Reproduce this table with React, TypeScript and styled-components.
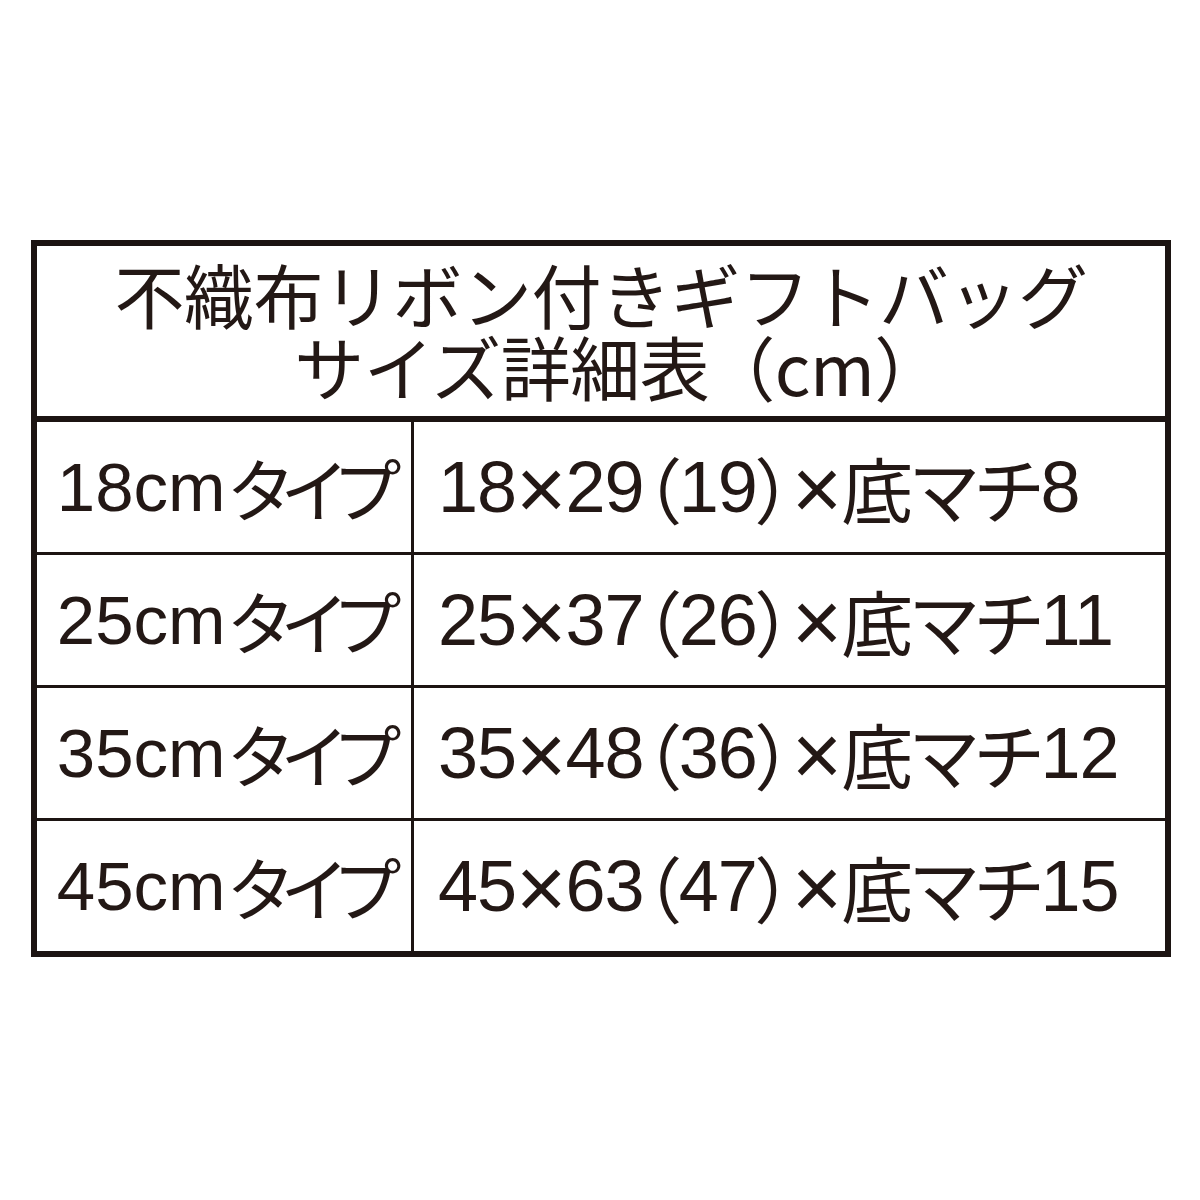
import React from 'react';
import styled, { createGlobalStyle } from 'styled-components';

const GlobalStyle = createGlobalStyle`
  html, body {
    margin: 0;
    padding: 0;
    background: #ffffff;
  }
  body {
    font-family: "Liberation Sans", "Noto Sans CJK JP", sans-serif;
    color: #231815;
  }
`;

const Page = styled.div`
  width: 1200px;
  height: 1200px;
  box-sizing: border-box;
  padding: 240px 0 0 31px;
  background: #ffffff;
`;

const Table = styled.div`
  width: 1140px;
  box-sizing: border-box;
  border: 6px solid #1c1412;
  display: flex;
  flex-direction: column;
`;

const Header = styled.div`
  height: 176px;
  box-sizing: border-box;
  border-bottom: 6px solid #1c1412;
  display: flex;
  flex-direction: column;
  align-items: center;
  justify-content: center;
  font-family: "Noto Sans CJK JP", sans-serif;
  font-size: 70px;
  line-height: 72px;
  letter-spacing: -0.5px;
  padding-bottom: 2px;
`;

const HeaderLine = styled.div`
  white-space: nowrap;
`;

const OpenParen = styled.span`
  margin-left: -4px;
`;

const CloseParen = styled.span`
  margin-right: -36px;
`;

const Row = styled.div<{ $first?: boolean }>`
  display: grid;
  grid-template-columns: 374px 1fr;
  height: ${(p) => (p.$first ? '130px' : '133px')};
  box-sizing: border-box;
  border-top: ${(p) => (p.$first ? 'none' : '3px solid #1c1412')};
`;

const TypeCell = styled.div`
  display: flex;
  align-items: center;
  justify-content: center;
  font-size: 69px;
  line-height: 1;
  white-space: nowrap;
  padding-left: 2px;
`;

const SizeCell = styled.div`
  display: flex;
  align-items: center;
  padding-left: 24px;
  border-left: 3px solid #1c1412;
  font-size: 72px;
  line-height: 1;
  letter-spacing: -1px;
  white-space: nowrap;
`;

const Kana = styled.span<{ $tight?: boolean }>`
  font-family: "Noto Sans CJK JP", sans-serif;
  font-feature-settings: "palt";
  letter-spacing: ${(p) => (p.$tight ? '-7px' : '-1px')};
  margin-left: ${(p) => (p.$tight ? '4px' : '0')};
`;

const Times = styled.span`
  font-size: 1.2em;
  position: relative;
  top: 0.02em;
`;

const rows = [
  { size: '18', h: '29', inner: '19', gusset: '8' },
  { size: '25', h: '37', inner: '26', gusset: '11' },
  { size: '35', h: '48', inner: '36', gusset: '12' },
  { size: '45', h: '63', inner: '47', gusset: '15' },
];

export default function App() {
  return (
    <>
      <GlobalStyle />
      <Page>
        <Table>
          <Header>
            <HeaderLine>不織布リボン付きギフトバッグ</HeaderLine>
            <HeaderLine>
              サイズ詳細表<OpenParen>（</OpenParen>cm<CloseParen>）</CloseParen>
            </HeaderLine>
          </Header>
          {rows.map((r, i) => (
            <Row key={r.size} $first={i === 0}>
              <TypeCell>
                {r.size}cm<Kana $tight>タイプ</Kana>
              </TypeCell>
              <SizeCell>
                {r.size}
                <Times>×</Times>
                {r.h}
                <Kana>（</Kana>
                {r.inner}
                <Kana>）</Kana>
                <Times>×</Times>
                <Kana>底マチ</Kana>
                {r.gusset}
              </SizeCell>
            </Row>
          ))}
        </Table>
      </Page>
    </>
  );
}
